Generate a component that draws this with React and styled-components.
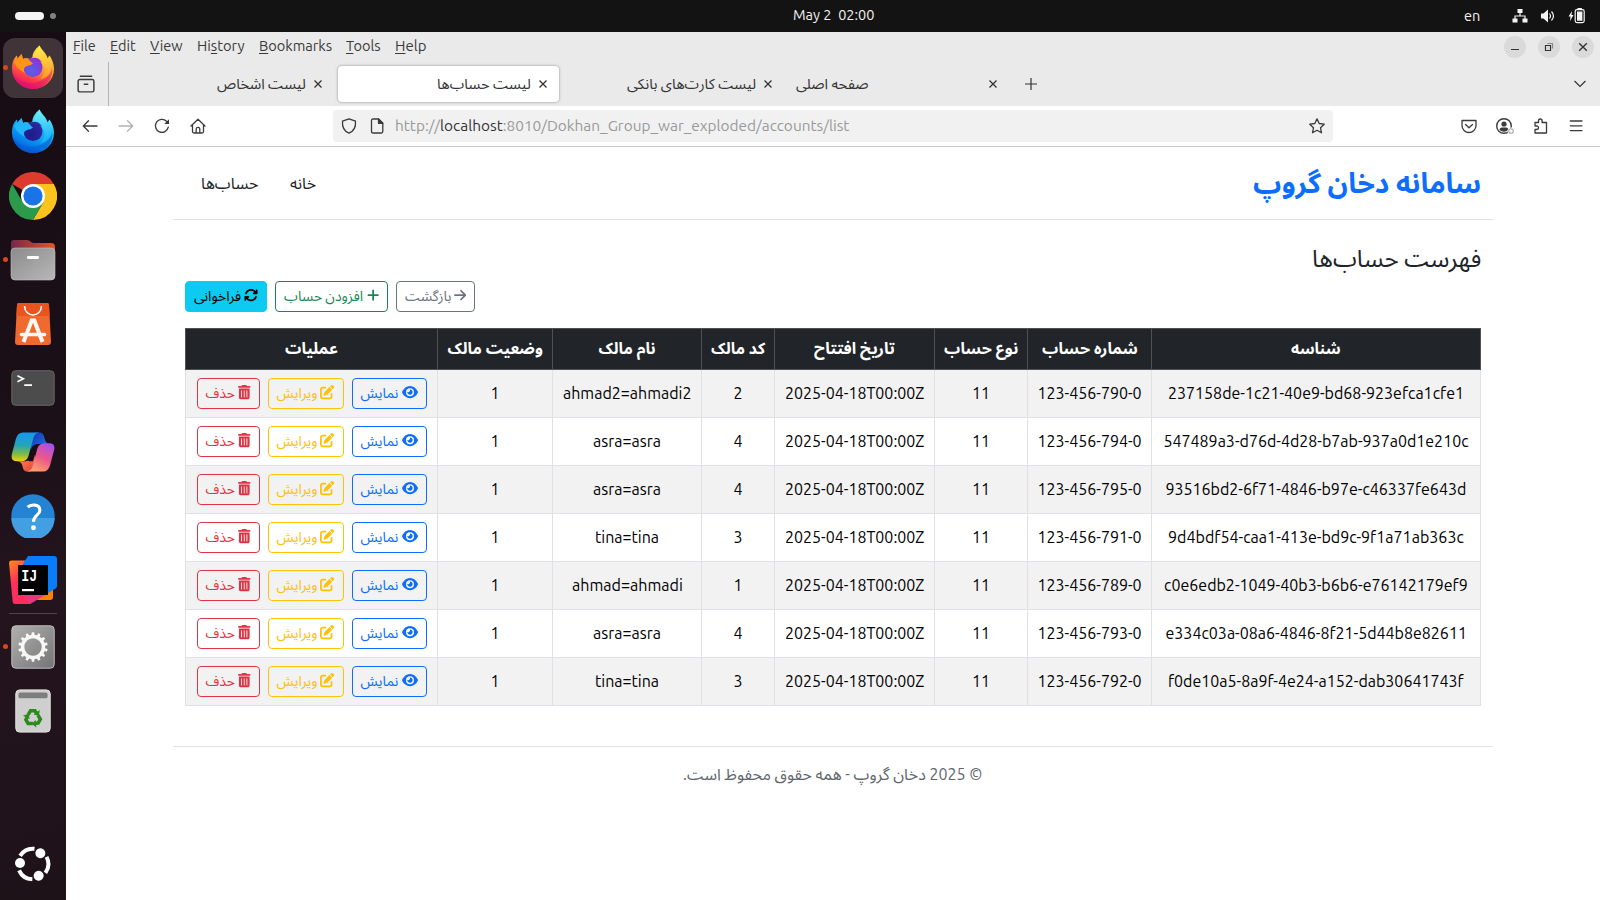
import React, { useLayoutEffect, useRef, useState } from "react";
import styled, { createGlobalStyle, css } from "styled-components";
import { FaEye, FaPenToSquare, FaTrashCan, FaArrowsRotate, FaPlus, FaArrowRight } from "react-icons/fa6";

const Global = createGlobalStyle`
  * { box-sizing: border-box; }
  body {
    margin: 0;
    overflow: hidden;
    background: #fff;
    font-family: Ubuntu, "Noto Sans", "Noto Sans Arabic", "Open Sans", sans-serif;
    font-size: 16px;
    line-height: 1.5;
  }
`;

/* ---------- text set to a known width ---------- */
const FitBox = styled.span`
  display: inline-block;
  flex: none;
  white-space: nowrap;
  text-align: left;
  direction: ltr;
  width: ${(p) => p.$w}px;
`;
const FitInner = styled.span`
  display: inline-block;
  white-space: pre;
  transform-origin: 0 50%;
`;
function Fit({ w, children, dir = "ltr" }) {
  const ref = useRef(null);
  const [scale, setScale] = useState(1);
  useLayoutEffect(() => {
    const natural = ref.current.offsetWidth;
    if (natural) setScale(w / natural);
  }, [w]);
  return (
    <FitBox $w={w}>
      <FitInner ref={ref} dir={dir} style={{ transform: `scaleX(${scale})` }}>{children}</FitInner>
    </FitBox>
  );
}
const Fa = ({ w, children }) => <Fit w={w} dir="rtl">{children}</Fit>;

/* ---------- desktop ---------- */
const Desktop = styled.div`
  width: 1600px;
  height: 900px;
  display: flex;
  flex-direction: column;
  overflow: hidden;
`;
const TopBar = styled.header`
  height: 32px;
  flex: none;
  background: #131313;
  color: #f2f2f2;
  display: grid;
  grid-template-columns: 1fr auto 1fr;
  align-items: center;
  padding: 0 15px;
  font-size: 14.5px;
  line-height: 20px;
`;
const Workspaces = styled.div`
  display: flex;
  align-items: center;
  gap: 6px;
`;
const Pill = styled.span`
  width: 29px;
  height: 8px;
  border-radius: 4px;
  background: #f4f4f4;
`;
const Dot = styled.span`
  width: 6px;
  height: 6px;
  border-radius: 50%;
  background: #828282;
`;
const Clock = styled.div`
  width: 148px;
  padding: 0 0 2px 67px;
  display: flex;
`;
const Status = styled.div`
  display: flex;
  justify-content: flex-end;
  align-items: center;
  svg { display: block; }
`;
const Lang = styled.span`
  margin-right: 32px;
  padding-bottom: 1px;
  display: flex;
`;
const Work = styled.div`
  flex: 1;
  display: flex;
  min-height: 0;
`;

/* ---------- dock ---------- */
const DockBar = styled.nav`
  width: 66px;
  flex: none;
  background: linear-gradient(165deg, #180c14 0%, #1b1017 45%, #24141d 65%, #1e1219 100%);
  display: flex;
  flex-direction: column;
  align-items: center;
  padding: 4px 0 4px;
`;
const Slot = styled.div`
  width: 60px;
  height: 60px;
  margin: 2px 0;
  flex: none;
  border-radius: 12px;
  display: flex;
  align-items: center;
  justify-content: center;
  position: relative;
  padding: 0 ${(p) => p.$right || 0}px ${(p) => p.$bottom || 0}px 0;
  background: ${(p) => (p.$active ? "#403439" : "transparent")};
  ${(p) =>
    p.$running &&
    css`
      &::before {
        content: "";
        position: absolute;
        left: 0;
        top: 27px;
        width: 5px;
        height: 5px;
        border-radius: 50%;
        background: #d8481b;
      }
    `}
  svg { display: block; }
`;
const DockLine = styled.div`
  width: 48px;
  height: 1px;
  margin: 1px 0;
  background: #4e454a;
`;
const DockSpace = styled.div`
  flex: 1;
`;

function FirefoxIcon({ id, c }) {
  return (
    <svg width="44" height="46" viewBox="0 0 44 46">
      <defs>
        <linearGradient id={id + "a"} x1="0.75" y1="0.05" x2="0.3" y2="1">
          <stop offset="0" stopColor={c[0]} />
          <stop offset="0.45" stopColor={c[1]} />
          <stop offset="0.75" stopColor={c[2]} />
          <stop offset="1" stopColor={c[3]} />
        </linearGradient>
        <radialGradient id={id + "b"} cx="0.4" cy="0.7" r="0.75">
          <stop offset="0" stopColor={c[5]} />
          <stop offset="1" stopColor={c[4]} />
        </radialGradient>
        <linearGradient id={id + "c"} x1="0.5" y1="0" x2="0.6" y2="1">
          <stop offset="0" stopColor={c[6]} />
          <stop offset="1" stopColor={c[1]} />
        </linearGradient>
      </defs>
      <path d="M1 25C1 18 3 14 6 11.500L7 17L10.500 10L12 15C14 14 17 14 19 15L22 13C24 9 27 4 28.500 1.500C30 6 33 8 35 11.500L36 15L38.500 11.500C41 15 43 20 43 25A21 20 0 0 1 1 25Z" fill={`url(#${id}a)`} />
      <path d="M28.500 1.500C24 5 21 10 21.500 14L30 18C36 23 34 31 29 35C39 33 43 25 41 18C40 14 39 13 38.500 11.500L37.500 17C36 9 31 7 28.500 1.500Z" fill={`url(#${id}c)`} opacity=".92" />
      <circle cx="22" cy="23.500" r="9.500" fill={`url(#${id}b)`} />
      <path d="M21 14C25 13 28 14 31 18L27 17Z" fill={c[4]} />
      <path d="M3 18L10.500 10L12 15C15 13 18 15 20 18L22 19.500C20 21 18 21.500 16 22C13 23 12 26 14 29C8 26 5 22 3 18Z" fill={c[7]} />
      <path d="M1.500 28C6 39 20 41 29 37C37 34 41 28 41 23C43 35 33 45 22 45C12 45 3.500 38 1.500 28Z" fill={c[3]} opacity=".5" />
    </svg>
  );
}
const ChromeIcon = () => (
  <svg width="48" height="48" viewBox="0 0 48 48">
    <path d="M24 24L3.200 12A24 24 0 0 1 44.800 12Z" fill="#dd3b2e" />
    <path d="M24 12H44.800A24 24 0 0 1 24 48L34.400 30Z" fill="#fcc31e" />
    <path d="M13.600 30L3.200 12A24 24 0 0 0 24 48L34.400 30Z" fill="#2b9a4b" />
    <circle cx="24" cy="24" r="12" fill="#fff" />
    <circle cx="24" cy="24" r="9.600" fill="#1b73e8" />
  </svg>
);
const FilesIcon = () => (
  <svg width="46" height="42" viewBox="0 0 46 42">
    <defs>
      <linearGradient id="fb" x1="0" x2="1"><stop offset="0" stopColor="#74284c" /><stop offset="1" stopColor="#e95420" /></linearGradient>
      <linearGradient id="ff" x1="0" y1="0" x2="1" y2="1"><stop offset="0" stopColor="#8b8b8b" /><stop offset="1" stopColor="#b8b8b8" /></linearGradient>
    </defs>
    <path d="M1 12V4Q1 1 4 1H17Q19 1 20.500 2.500T24 4H41Q45 4 45 8V14H1Z" fill="url(#fb)" />
    <rect x="1" y="9" width="44" height="32" rx="4" fill="url(#ff)" stroke="#c3c3c3" strokeWidth=".6" />
    <rect x="17" y="17" width="12" height="3" rx="1.200" fill="#fff" />
  </svg>
);
const StoreIcon = () => (
  <svg width="36" height="42" viewBox="0 0 36 42">
    <path d="M4 0H32Q34 0 34 2L36 39Q36 42 33 42H3Q0 42 0 39L2 2Q2 0 4 0Z" fill="#f06a30" />
    <path d="M4 0H32Q34 0 34 2L34.700 13H1.300L2 2Q2 0 4 0Z" fill="#e9541f" />
    <path d="M9.500 3C10 15 26 15 26.500 3" fill="none" stroke="#fff" strokeWidth="1.600" />
    <path d="M8.500 39L16.700 17.500H19.300L27.500 39" fill="none" stroke="#fff7f2" strokeWidth="4" />
    <path d="M6.500 31.500H29.500" fill="none" stroke="#fff7f2" strokeWidth="3.600" strokeLinecap="round" />
  </svg>
);
const TerminalIcon = () => (
  <svg width="44" height="36" viewBox="0 0 45 37">
    <rect x=".7" y=".7" width="43.600" height="35.600" rx="4" fill="#4c4c4c" stroke="#666" strokeWidth="1" />
    <path d="M6.500 6L12.500 9L6.500 12M13.500 15.500H21.500" fill="none" stroke="#fff" strokeWidth="1.700" />
  </svg>
);
const CopilotIcon = () => (
  <svg width="44" height="40" viewBox="0 0 45 41">
    <defs>
      <linearGradient id="cp1" x1="0.3" y1="0" x2="0.3" y2="1"><stop offset="0" stopColor="#1499ee" /><stop offset=".45" stopColor="#25a4b9" /><stop offset=".75" stopColor="#7dbb45" /><stop offset="1" stopColor="#f4d00e" /></linearGradient>
      <linearGradient id="cp2" x1="0.8" y1="0" x2="0.3" y2="1"><stop offset="0" stopColor="#a651ec" /><stop offset=".5" stopColor="#eb5788" /><stop offset="1" stopColor="#ffa56a" /></linearGradient>
      <linearGradient id="cp3" x1="0" y1="0" x2="1" y2="1"><stop offset="0" stopColor="#1730b5" /><stop offset="1" stopColor="#1d83ee" /></linearGradient>
      <linearGradient id="cp4" x1="0" y1="0" x2="1" y2="1"><stop offset="0" stopColor="#ff9951" /><stop offset="1" stopColor="#e33d3c" /></linearGradient>
    </defs>
    <path d="M25 .5H29C32.500 .5 33.500 3 34.500 7Q35.500 11.500 39 12H30C24 12 23 15 20.500 20L20 10Z" fill="url(#cp3)" />
    <path d="M20 40.500H17C13 40.500 12.500 38 11.500 34Q10 30 6 30H15Q21 29 24 22L25 30Z" fill="url(#cp4)" />
    <path d="M12 .5H29Q24.500 1 23 6L18 24Q16.500 30 10 30H6Q-1 30 1 22L5 7Q7 .5 12 .5Z" fill="url(#cp1)" />
    <path d="M33 40.500H16Q20.500 40 22 35L27 17Q28.500 11.500 35 11.500H39Q46 11.500 44 19L40 34Q38 40.500 33 40.500Z" fill="url(#cp2)" />
    <path d="M27.500 12.500L22.500 30H18.500Q17.500 30 18 28L21 16.500Q22.500 12.500 27.500 12.500Z" fill="#190e16" />
  </svg>
);
const HelpIcon = () => (
  <svg width="44" height="44" viewBox="0 0 45 45">
    <circle cx="22.500" cy="22.500" r="22.200" fill="#2483d3" />
    <path d="M.3 24.500A22.200 22.200 0 0 0 44.700 24.500Z" fill="#429fe1" />
    <path d="M17 13.500C20 10.500 29.500 9.800 29.500 16.500C29.500 22 23 21.500 23 28.500" fill="none" stroke="#fff" strokeWidth="3.200" />
    <circle cx="23" cy="34.500" r="2.500" fill="#fff" />
  </svg>
);
const IntelliJIcon = () => (
  <svg width="48" height="48" viewBox="0 0 48 48">
    <defs>
      <linearGradient id="ij1" x1="0" y1="0" x2=".4" y2="1"><stop offset="0" stopColor="#ff8a18" /><stop offset=".5" stopColor="#fe315d" /><stop offset="1" stopColor="#fe2b60" /></linearGradient>
      <linearGradient id="ij2" x1="1" y1="0" x2="0" y2="1"><stop offset="0" stopColor="#087cfa" /><stop offset=".6" stopColor="#087cfa" /><stop offset="1" stopColor="#8a4bb8" /></linearGradient>
    </defs>
    <path d="M28 36L44 33V41Q44 44 41 44H27Z" fill="#ff8000" />
    <path d="M0 7Q0 4.500 2.500 4.500H18L28 40L21 48H6Q4 48 3.700 46Z" fill="url(#ij1)" />
    <path d="M19 0H45Q48 0 48 3V30Q48 31.500 46.500 32.500L21 48L14 8Z" fill="url(#ij2)" />
    <path d="M21 48L36 39L30 30L14 38Z" fill="#e8377b" />
    <rect x="9" y="9" width="30" height="30" fill="#000" />
    <text x="12.200" y="24.500" fill="#fff" fontFamily="Liberation Mono" fontWeight="700" fontSize="17" textLength="16" lengthAdjust="spacingAndGlyphs">IJ</text>
    <rect x="13" y="33" width="12" height="2.200" fill="#fff" />
  </svg>
);
const SettingsIcon = () => (
  <svg width="44" height="44" viewBox="0 0 45 45">
    <defs><linearGradient id="sg" x1="0" y1="0" x2="1" y2="1"><stop offset="0" stopColor="#b0b0b0" /><stop offset="1" stopColor="#747474" /></linearGradient></defs>
    <rect x=".8" y=".8" width="43.400" height="43.400" rx="4" fill="url(#sg)" stroke="#bdbdbd" />
    <circle cx="22.500" cy="22.500" r="10.700" fill="none" stroke="#f7f7f5" strokeWidth="3.600" />
    {Array.from({ length: 14 }, (_, i) => (
      <path key={i} d="M20.800 11L21.300 7.500H23.700L24.200 11Z" fill="#f7f7f5" transform={`rotate(${(i * 360) / 14} 22.500 22.500)`} />
    ))}
  </svg>
);
const TrashIcon = () => (
  <svg width="36" height="44" viewBox="0 0 37 45">
    <rect x=".8" y=".8" width="35.400" height="43.400" rx="4" fill="#cfcfcf" stroke="#e2e2e2" />
    <rect x="3.500" y="3.500" width="30" height="6" rx="2" fill="#7e7e7e" />
    <g fill="none" stroke="#2b8a1c" strokeWidth="3.600">
      {[0, 120, 240].map((a) => (
        <g key={a} transform={`rotate(${a} 18.500 29.500)`}>
          <path d="M13.500 26.500L16 22.200H20.500L22 24.500" />
          <path d="M25.500 21.500L24.500 27.500L19 26Z" fill="#2b8a1c" stroke="none" />
        </g>
      ))}
    </g>
  </svg>
);
const UbuntuIcon = () => (
  <svg width="36" height="36" viewBox="0 0 36 36">
    <g transform="translate(18 18)">
      {[0, 120, 240].map((a) => (
        <g key={a} transform={`rotate(${a})`}>
          <circle cx="-13" cy="-1" r="5" fill="#fff" />
          <path d="M-12.900 -8.200A15.300 15.300 0 0 1 1.500 -15.200" fill="none" stroke="#fff" strokeWidth="4" />
        </g>
      ))}
    </g>
  </svg>
);

/* ---------- browser chrome ---------- */
const Browser = styled.section`
  flex: 1;
  display: flex;
  flex-direction: column;
  background: #fff;
  min-width: 0;
`;
const MenuRow = styled.div`
  height: 30px;
  flex: none;
  background: #eaeaea;
  color: #3a3a3a;
  display: flex;
  align-items: center;
  justify-content: space-between;
  padding: 0 6px 0 7px;
  font-size: 15px;
  line-height: 20px;
`;
const Menus = styled.div`
  display: flex;
  gap: 14px;
  height: 20px;
  margin-top: -3px;
  u { text-underline-offset: 2px; text-decoration-thickness: 1px; }
`;
const WinButtons = styled.div`
  display: flex;
  gap: 12px;
`;
const WinButton = styled.span`
  width: 22px;
  height: 22px;
  border-radius: 50%;
  background: #dadada;
  display: flex;
`;
const TabRow = styled.div`
  height: 44px;
  flex: none;
  background: #eaeaea;
  display: flex;
  color: #333;
  font-size: 14.5px;
  line-height: 20px;
`;
const Overview = styled.div`
  width: 43px;
  margin-right: 2px;
  border-right: 1px solid #b5b5b5;
  display: flex;
  align-items: center;
  justify-content: center;
  padding-right: 2px;
`;
const Tab = styled.div`
  width: 221px;
  height: 36px;
  margin: 4px 2px 0;
  padding: 0 12px 0 8px;
  border-radius: 4px;
  display: flex;
  align-items: center;
  justify-content: ${(p) => (p.$spread ? "space-between" : "flex-end")};
  gap: 8px;
  ${(p) => p.$active && css`background: #fff; box-shadow: 0 0 3px rgba(0, 0, 0, 0.4);`}
  > span { padding-bottom: 1px; }
`;
const TabGlyph = styled.div`
  width: ${(p) => p.$w}px;
  display: flex;
  align-items: center;
  justify-content: center;
  margin-left: ${(p) => (p.$end ? "auto" : "0")};
`;
const NavRow = styled.div`
  height: 41px;
  flex: none;
  border-bottom: 1px solid #c8c8c8;
  display: flex;
  align-items: center;
  justify-content: space-between;
  padding: 0 16px;
`;
const IconGroup = styled.div`
  display: flex;
  align-items: center;
  gap: ${(p) => p.$gap}px;
  svg { display: block; }
`;
const UrlBar = styled.div`
  width: 1000px;
  height: 32px;
  margin-left: 127px;
  margin-right: auto;
  border-radius: 4px;
  background: #f1f1f1;
  display: flex;
  align-items: center;
  padding: 0 8px;
  color: #999;
  font-size: 15.500px;
  line-height: 22px;
  svg { flex: none; }
  b { font-weight: 400; color: #333; }
`;
const UrlText = styled.span`
  margin-left: 10px;
  margin-right: auto;
  display: flex;
`;

const Svg = ({ s = 16, children, color = "#3b3b3b", sw = 1.3 }) => (
  <svg width={s} height={s} viewBox="0 0 16 16" fill="none" stroke={color} strokeWidth={sw} strokeLinecap="round" strokeLinejoin="round">{children}</svg>
);
const CloseX = () => (
  <svg width="8" height="8" viewBox="0 0 8 8" stroke="#333" strokeWidth="1.300"><path d="M.5 .5L7.500 7.500M7.500 .5L.5 7.500" /></svg>
);

/* ---------- page ---------- */
const Page = styled.main`
  width: 1320px;
  margin-left: 107px;
  display: flex;
  flex-direction: column;
  color: #212529;
  direction: rtl;
`;
const SiteHeader = styled.header`
  height: 73px;
  border-bottom: 1px solid #dee2e6;
  padding: 0 12px;
  display: flex;
  align-items: center;
  justify-content: space-between;
`;
const Brand = styled.div`
  color: #0d6efd;
  font-weight: 700;
  font-size: 28px;
  line-height: 40px;
`;
const SiteNav = styled.nav`
  display: flex;
  gap: 32px;
  padding-left: 16px;
`;
const Content = styled.section`
  padding: 0 12px;
  display: flex;
  flex-direction: column;
  height: 527px;
  border-bottom: 1px solid #dee2e6;
`;
const Heading = styled.h4`
  margin: 23px 0 0;
  font-size: 24px;
  font-weight: 400;
  line-height: 32px;
`;
const Actions = styled.div`
  display: flex;
  justify-content: flex-end;
  gap: 8px;
  margin: 6px 0 16px;
`;
const palette = { danger: "#dc3545", warning: "#ffc107", primary: "#0d6efd", secondary: "#6c757d", success: "#198754" };
const Button = styled.button`
  height: 31px;
  width: ${(p) => p.$w}px;
  padding: 0 8px;
  margin: 0;
  display: inline-flex;
  align-items: center;
  justify-content: space-between;
  font-family: inherit;
  font-size: 14px;
  line-height: 21px;
  border-radius: 4px;
  color: ${(p) => (p.$solid ? "#000" : palette[p.$tone])};
  background: ${(p) => (p.$solid ? "#0dcaf0" : "transparent")};
  border: 1px solid ${(p) => (p.$solid ? "#0dcaf0" : palette[p.$tone])};
  svg {
    display: block;
    flex: none;
    margin-top: -2px;
    height: 14.25px;
    width: ${(p) => p.$icon || 14}px;
  }
`;
const Table = styled.table`
  width: 1296px;
  table-layout: fixed;
  border-collapse: collapse;
  text-align: center;
`;
const Th = styled.th`
  height: 41px;
  padding: 0 0 2px;
  border: 1px solid #4d5154;
  background: #212529;
  color: #fff;
  font-weight: 700;
  line-height: 24px;
`;
const Td = styled.td`
  height: 48px;
  padding: 0 0 ${(p) => (p.$buttons ? 0 : 2)}px;
  border: 1px solid #dee2e6;
  color: #000;
  line-height: 24px;
  background: ${(p) => (p.$odd ? "#f2f2f2" : "#fff")};
`;
const RowActions = styled.div`
  display: flex;
  justify-content: center;
  gap: 8px;
`;
const SiteFooter = styled.footer`
  display: flex;
  justify-content: center;
  padding-top: 15px;
  color: #5f666c;
`;

const columns = [
  ["شناسه", 50, 329], ["شماره حساب", 95.5, 124], ["نوع حساب", 74, 93], ["تاریخ افتتاح", 81, 160],
  ["کد مالک", 54.5, 73], ["نام مالک", 57, 149], ["وضعیت مالک", 95, 115], ["عملیات", 52.5, 252],
];
const accounts = [
  ["237158de-1c21-40e9-bd68-923efca1cfe1", 296, "790", "2", "ahmad2=ahmadi2", 128],
  ["547489a3-d76d-4d28-b7ab-937a0d1e210c", 305, "794", "4", "asra=asra", 68],
  ["93516bd2-6f71-4846-b97e-c46337fe643d", 301, "795", "4", "asra=asra", 68],
  ["9d4bdf54-caa1-413e-bd9c-9f1a71ab363c", 296, "791", "3", "tina=tina", 64],
  ["c0e6edb2-1049-40b3-b6b6-e76142179ef9", 304, "789", "1", "ahmad=ahmadi", 110.5],
  ["e334c03a-08a6-4846-8f21-5d44b8e82611", 301, "793", "4", "asra=asra", 68],
  ["f0de10a5-8a9f-4e24-a152-dab30641743f", 296, "792", "3", "tina=tina", 64],
];
const menus = [["", "F", "ile", 23], ["", "E", "dit", 26], ["", "V", "iew", 33], ["Hi", "s", "tory", 48], ["", "B", "ookmarks", 73], ["", "T", "ools", 35], ["", "H", "elp", 31]];

export default function App() {
  return (
    <Desktop>
      <Global />
      <TopBar>
        <Workspaces><Pill /><Dot /></Workspaces>
        <Clock><Fit w={81}>May 2  02:00</Fit></Clock>
        <Status>
          <Lang><Fit w={16}>en</Fit></Lang>
          <IconGroup $gap={12}>
            <svg width="16" height="16" viewBox="0 0 16 16" fill="#f4f4f4"><path d="M5.500 1h5v4h-5zM.5 10.500h5v4h-5zM10.500 10.500h5v4h-5z" /><path d="M8 5V8M3 11V8H13V11" fill="none" stroke="#f4f4f4" strokeWidth="1.200" /></svg>
            <svg width="16" height="16" viewBox="0 0 16 16"><path d="M1 5.500H3.500L8 1.500V14.500L3.500 10.500H1Z" fill="#f4f4f4" /><path d="M9.500 5.500Q11.500 8 9.500 10.500M11.500 3.500Q15.500 8 11.500 12.500" fill="none" stroke="#f4f4f4" strokeWidth="1.200" /></svg>
            <svg width="17" height="16" viewBox="0 0 17 16"><path d="M4 3L.5 8.500H2.500L2 13L5.500 7H3.500Z" fill="#f4f4f4" /><rect x="7.200" y="1.600" width="9" height="13" rx="1.800" fill="none" stroke="#f4f4f4" strokeWidth="1.200" /><path d="M9 3.500h5.400v9.200H9zM9.500 0h4.400v2H9.500z" fill="#f4f4f4" /></svg>
          </IconGroup>
        </Status>
      </TopBar>
      <Work>
        <DockBar>
          <Slot $active $running $bottom={2}><FirefoxIcon id="fx" c={["#ffee3f", "#ff9a2e", "#ff3b48", "#db0b76", "#8f31d8", "#5462e8", "#fff04a", "#ff9416"]} /></Slot>
          <Slot $bottom={2}><FirefoxIcon id="fd" c={["#5ce8ff", "#11aef5", "#0684ef", "#0353cf", "#2d2aa5", "#1d1a86", "#70efff", "#22b6f8"]} /></Slot>
          <Slot><ChromeIcon /></Slot>
          <Slot $running><FilesIcon /></Slot>
          <Slot><StoreIcon /></Slot>
          <Slot><TerminalIcon /></Slot>
          <Slot><CopilotIcon /></Slot>
          <Slot><HelpIcon /></Slot>
          <Slot><IntelliJIcon /></Slot>
          <DockLine />
          <Slot $running><SettingsIcon /></Slot>
          <Slot><TrashIcon /></Slot>
          <DockSpace />
          <Slot $right={1}><UbuntuIcon /></Slot>
        </DockBar>
        <Browser>
          <MenuRow>
            <Menus>{menus.map(([a, b, c, w]) => <Fit key={b + c} w={w}>{a}<u>{b}</u>{c}</Fit>)}</Menus>
            <WinButtons>
              <WinButton><svg width="22" height="22" stroke="#333" strokeWidth="1"><path d="M7 13.500H15" /></svg></WinButton>
              <WinButton><svg width="22" height="22" fill="none" stroke="#333" strokeWidth="1.200"><path d="M7.500 9.500H12.500V14.500H7.500Z" /><path d="M9.500 7.500H14.500V12.500" stroke="#888" /></svg></WinButton>
              <WinButton><svg width="22" height="22" stroke="#333" strokeWidth="1.400"><path d="M7.200 7.200L14.800 14.800M14.800 7.200L7.200 14.800" /></svg></WinButton>
            </WinButtons>
          </MenuRow>
          <TabRow>
            <Overview><Svg s={18} sw={1.3}><path d="M3 1.200H13" /><rect x="1" y="4" width="14" height="11" rx="1.500" /><path d="M6.500 8.200H9.500" /></Svg></Overview>
            <Tab><Fa w={89}>لیست اشخاص</Fa><CloseX /></Tab>
            <Tab $active><Fa w={94}>لیست حساب‌ها</Fa><CloseX /></Tab>
            <Tab><Fa w={129.5}>لیست کارت‌های بانکی</Fa><CloseX /></Tab>
            <Tab $spread><Fa w={72}>صفحه اصلی</Fa><CloseX /></Tab>
            <TabGlyph $w={39}><svg width="12" height="12" stroke="#333" strokeWidth="1.200"><path d="M6 0V12M0 6H12" /></svg></TabGlyph>
            <TabGlyph $w={40} $end><svg width="14" height="8" fill="none" stroke="#333" strokeWidth="1.200"><path d="M1.500 1L7 6.500L12.500 1" /></svg></TabGlyph>
          </TabRow>
          <NavRow>
            <IconGroup $gap={20}>
              <Svg><path d="M15 8H1.500M6.500 2.800L1.300 8L6.500 13.200" /></Svg>
              <Svg color="#b3b3b3"><path d="M1 8H14.500M9.500 2.800L14.700 8L9.500 13.200" /></Svg>
              <Svg><path d="M14.300 9.200A6.500 6.500 0 1 1 12.500 3.200L13.500 4.200" /><path d="M15 1.200V6H10.200Z" fill="#3b3b3b" stroke="none" /></Svg>
              <Svg><path d="M1 8L8 1.200L15 8M2.500 7V13.500Q2.500 15 4 15H12Q13.500 15 13.500 13.500V7M6.200 14.500V11Q6.200 9.300 8 9.300T9.800 11V14.500" /></Svg>
            </IconGroup>
            <UrlBar>
              <IconGroup $gap={12}>
                <Svg><path d="M8 .8L14.500 3.200C15 9 13 13 8 15.200C3 13 1 9 1.500 3.200Z" /></Svg>
                <Svg><path d="M2.500 2.500Q2.500 1 4 1H9.500L13.800 5.300V13.500Q13.800 15 12.300 15H4Q2.500 15 2.500 13.500Z" /><path d="M9.500 1V5.300H13.800Z" fill="#3b3b3b" /></Svg>
              </IconGroup>
              <UrlText><Fit w={454}>http://<b>localhost</b>:8010/Dokhan_Group_war_exploded/accounts/list</Fit></UrlText>
              <Svg><path d="M8 .9L10.200 5.500L15.200 6.200L11.500 9.700L12.500 14.800L8 12.300L3.500 14.800L4.500 9.700L.8 6.200L5.800 5.500Z" /></Svg>
            </UrlBar>
            <IconGroup $gap={19}>
              <Svg><path d="M1 2.500H15V7.500A7 7 0 0 1 1 7.500ZM4.500 6.500L8 9.800L11.500 6.500" /></Svg>
              <svg width="18" height="16" viewBox="0 0 18 16"><circle cx="8" cy="8" r="7.300" fill="none" stroke="#3b3b3b" strokeWidth="1.400" /><circle cx="8" cy="6" r="2.600" fill="#3b3b3b" /><path d="M3.500 12Q3.500 9.500 6 9.500H10Q12.500 9.500 12.500 12Q8 15.500 3.500 12Z" fill="#3b3b3b" /><circle cx="15" cy="13" r="3.500" fill="#fff" /><circle cx="15" cy="13" r="2.300" fill="#fff" stroke="#aaa" strokeWidth="1.100" /></svg>
              <Svg><path d="M2 5.500V4.500H5.500V3Q5.500 1 7.300 1T9.100 3V4.500H13.500V15H2V11.500H3.500Q5.500 11.500 5.500 9.700T3.500 8H2Z" /></Svg>
              <Svg><path d="M2.300 3H14M2.300 7.800H14M2.300 12.600H14" /></Svg>
            </IconGroup>
          </NavRow>
          <Page>
            <SiteHeader>
              <Brand><Fa w={228}>سامانه دخان گروپ</Fa></Brand>
              <SiteNav><Fa w={26}>خانه</Fa><Fa w={57}>حساب‌ها</Fa></SiteNav>
            </SiteHeader>
            <Content>
              <Heading><Fa w={169}>فهرست حساب‌ها</Fa></Heading>
              <Actions>
                <Button $w={79} $icon={12.25} $tone="secondary"><FaArrowRight /><Fa w={46}>بازگشت</Fa></Button>
                <Button $w={113} $icon={12.25} $tone="success"><FaPlus /><Fa w={79}>افزودن حساب</Fa></Button>
                <Button $w={82} $solid><FaArrowsRotate /><Fa w={47}>فراخوانی</Fa></Button>
              </Actions>
              <Table>
                <colgroup>{columns.map((c) => <col key={c[0]} width={c[2]} />)}</colgroup>
                <thead><tr>{columns.map(([t, w]) => <Th key={t}><Fa w={w}>{t}</Fa></Th>)}</tr></thead>
                <tbody>
                  {accounts.map(([id, iw, no, code, name, nw], i) => (
                    <tr key={id}>
                      <Td $odd={i % 2 === 0}><Fit w={iw}>{id}</Fit></Td>
                      <Td $odd={i % 2 === 0}><Fit w={104}>{`123-456-${no}-0`}</Fit></Td>
                      <Td $odd={i % 2 === 0}><Fit w={18}>11</Fit></Td>
                      <Td $odd={i % 2 === 0}><Fit w={139}>2025-04-18T00:00Z</Fit></Td>
                      <Td $odd={i % 2 === 0}><Fit w={9}>{code}</Fit></Td>
                      <Td $odd={i % 2 === 0}><Fit w={nw}>{name}</Fit></Td>
                      <Td $odd={i % 2 === 0}><Fit w={9}>1</Fit></Td>
                      <Td $odd={i % 2 === 0} $buttons>
                        <RowActions>
                          <Button $w={75} $icon={16} $tone="primary"><FaEye /><Fa w={38}>نمایش</Fa></Button>
                          <Button $w={76} $icon={14.25} $tone="warning"><FaPenToSquare /><Fa w={41}>ویرایش</Fa></Button>
                          <Button $w={63} $icon={12.5} $tone="danger"><FaTrashCan /><Fa w={29}>حذف</Fa></Button>
                        </RowActions>
                      </Td>
                    </tr>
                  ))}
                </tbody>
              </Table>
            </Content>
            <SiteFooter><Fa w={299.5}>© 2025 دخان گروپ - همه حقوق محفوظ است.</Fa></SiteFooter>
          </Page>
        </Browser>
      </Work>
    </Desktop>
  );
}
